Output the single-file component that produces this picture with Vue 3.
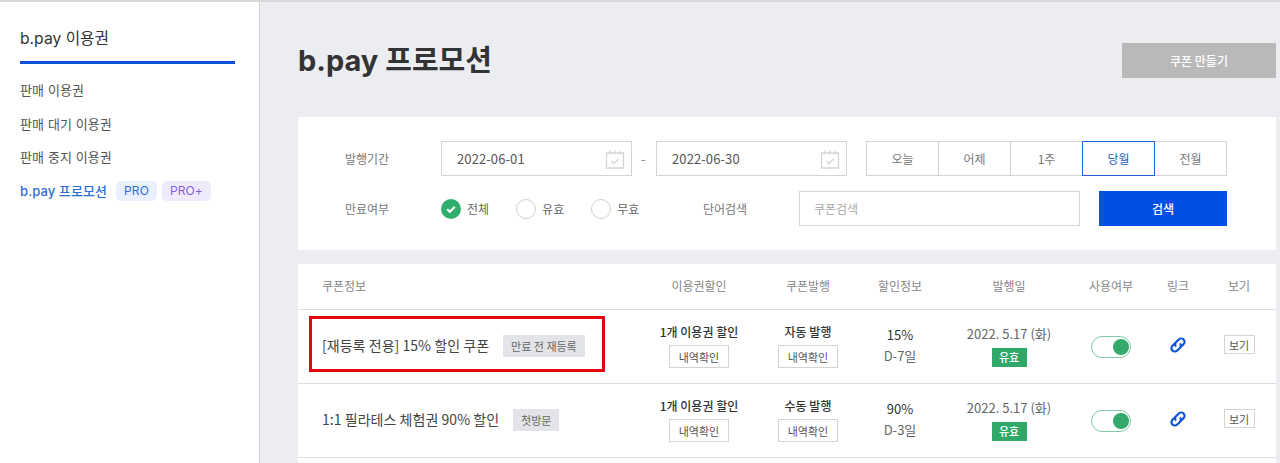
<template>
  <div class="page">
    <div class="topline"></div>
    <div class="layout">
      <aside class="side">
        <h2 class="side-title">b.pay 이용권</h2>
        <ul class="menu">
          <li v-for="m in menu" :key="m">{{ m }}</li>
          <li class="on">
            b.pay 프로모션
            <span class="pro">PRO</span>
            <span class="pro plus">PRO+</span>
          </li>
        </ul>
      </aside>

      <main class="main">
        <div class="head">
          <h1>b.pay 프로모션</h1>
          <button class="make">쿠폰 만들기</button>
        </div>

        <section class="card search">
          <div class="line">
            <span class="lab">발행기간</span>
            <div class="date" v-for="(d, i) in dates" :key="d" :class="{ second: i === 1 }">
              <span>{{ d }}</span>
              <svg width="20" height="20" viewBox="0 0 20 20" fill="none" stroke="#d6d6d6" stroke-width="1.3">
                <path d="M1.5 4h17v15h-17z" />
                <path d="M5 1.5v4M10 1.5v4M15 1.5v4" />
                <path d="M6.5 12l2.5 2.5 4.5-4.5" />
              </svg>
            </div>
            <div class="presets">
              <button
                v-for="p in presets"
                :key="p"
                :class="{ active: p === '당월' }">{{ p }}</button>
            </div>
          </div>
          <div class="line">
            <span class="lab">만료여부</span>
            <div class="radios">
              <label v-for="r in radios" :key="r">
                <span class="circle" :class="{ checked: r === '전체' }">
                  <svg v-if="r === '전체'" width="12" height="12" viewBox="0 0 12 12" fill="none" stroke="#fff" stroke-width="2">
                    <path d="M2.2 6.2l2.7 2.6 4.9-5" />
                  </svg>
                </span>
                {{ r }}
              </label>
            </div>
            <span class="lab">단어검색</span>
            <input class="word" type="text" placeholder="쿠폰검색" />
            <button class="go">검색</button>
          </div>
        </section>

        <section class="card list">
          <div class="row th">
            <div class="c-info">쿠폰정보</div>
            <div>이용권할인</div>
            <div>쿠폰발행</div>
            <div>할인정보</div>
            <div>발행일</div>
            <div>사용여부</div>
            <div>링크</div>
            <div>보기</div>
          </div>
          <div class="row td" v-for="(c, i) in coupons" :key="c.name">
            <div class="c-info">
              <span class="name">{{ c.name }}</span>
              <span class="tag">{{ c.tag }}</span>
            </div>
            <div class="stack">
              <b>1개 이용권 할인</b>
              <button class="small">내역확인</button>
            </div>
            <div class="stack">
              <b>{{ c.issue }}</b>
              <button class="small">내역확인</button>
            </div>
            <div class="stack disc">
              <em>{{ c.pct }}</em>
              <span>{{ c.day }}</span>
            </div>
            <div class="stack">
              <span class="when">2022. 5.17 (화)</span>
              <span class="valid">유효</span>
            </div>
            <div><span class="toggle"><i></i></span></div>
            <div>
              <svg class="chain" width="18" height="18" viewBox="0 0 24 24" fill="none" stroke="#0b50d8" stroke-width="2.8" stroke-linecap="round" stroke-linejoin="round">
                <g transform="rotate(-45 12 12)">
                  <path d="M10.5 7.5H6a4.5 4.5 0 0 0 0 9h5a4.5 4.5 0 0 0 4.2-3" />
                  <path d="M13.5 16.5H18a4.5 4.5 0 0 0 0-9h-5a4.5 4.5 0 0 0-4.2 3" />
                </g>
              </svg>
            </div>
            <div><button class="view">보기</button></div>
            <div v-if="i === 0" class="redbox"></div>
          </div>
        </section>
      </main>
    </div>
  </div>
</template>

<script setup>
const menu = ['판매 이용권', '판매 대기 이용권', '판매 중지 이용권']
const dates = ['2022-06-01', '2022-06-30']
const presets = ['오늘', '어제', '1주', '당월', '전월']
const radios = ['전체', '유효', '무효']

const coupons = [
  { name: '[재등록 전용] 15% 할인 쿠폰', tag: '만료 전 재등록', issue: '자동 발행', pct: '15%', day: 'D-7일' },
  { name: '1:1 필라테스 체험권 90% 할인', tag: '첫방문', issue: '수동 발행', pct: '90%', day: 'D-3일' }
]
</script>

<style>
html, body {
  margin: 0;
  height: 100%;
  overflow: hidden;
}
</style>

<style scoped>
* {
  box-sizing: border-box;
}

.page {
  height: 100vh;
  display: flex;
  flex-direction: column;
  overflow: hidden;
  font-family: "Noto Sans CJK KR", "Noto Sans", sans-serif;
  color: #444;
  background: #ebedf0;
}

button {
  font-family: inherit;
  cursor: pointer;
}

.topline {
  height: 2px;
  flex: none;
  background: #d8d8d8;
}

.layout {
  flex: 1;
  display: flex;
  min-height: 0;
}

.side {
  width: 260px;
  flex: none;
  padding: 0 24px 0 20px;
  background: #fff;
  border-right: 1px solid #cfd2d6;
  font-family: Inter, "Noto Sans CJK KR", sans-serif;
}

.side-title {
  margin: 0;
  height: 62px;
  padding-top: 25px;
  font-size: 15.7px;
  line-height: 24px;
  font-weight: 400;
  color: #333;
  border-bottom: 3px solid #0b50d8;
}

.menu {
  list-style: none;
  margin: 0;
  padding: 9px 0 0;
}

.menu li {
  height: 33.6px;
  display: flex;
  align-items: center;
  font-size: 13px;
  letter-spacing: .1px;
  color: #555;
}

.menu li.on {
  color: #2a6fd6;
  font-weight: 500;
}

.pro {
  height: 20px;
  margin-left: 9px;
  padding: 0 8px;
  border-radius: 5px;
  background: #e8f0fe;
  color: #2a6fd6;
  font-size: 12px;
  line-height: 20px;
  font-weight: 400;
}

.pro.plus {
  margin-left: 5px;
  background: #f0eafd;
  color: #8a5ce6;
}

.main {
  flex: 1;
  min-width: 0;
  display: flex;
  flex-direction: column;
  padding: 41px 4px 0 38px;
}

.head {
  display: flex;
  justify-content: space-between;
  align-items: center;
  height: 35px;
  margin-bottom: 39px;
}

.head h1 {
  margin: 0;
  padding-bottom: 6px;
  font-family: Inter, "Noto Sans CJK KR", sans-serif;
  font-size: 29px;
  font-weight: 700;
  color: #333;
}

.make {
  width: 154px;
  height: 35px;
  border: 0;
  background: #b9b9b9;
  color: #fff;
  font-size: 12px;
  font-weight: 500;
}

.card {
  background: #fff;
}

.search {
  display: flex;
  flex-direction: column;
  gap: 15px;
  height: 133px;
  padding: 24px 49px 0 47px;
  margin-bottom: 14px;
  font-size: 12px;
}

.line {
  display: flex;
  align-items: center;
  height: 35px;
}

.lab {
  width: 96px;
  flex: none;
  color: #777;
}

.date {
  width: 191px;
  height: 35px;
  display: flex;
  align-items: center;
  justify-content: space-between;
  padding: 0 6px 0 15px;
  border: 1px solid #d4d4d4;
  font-size: 13px;
  letter-spacing: .1px;
  color: #555;
}

.date.second {
  margin-left: 24px;
  position: relative;
}

.date.second::before {
  content: "-";
  position: absolute;
  left: -16px;
  color: #888;
}

.presets {
  display: flex;
  width: 361px;
  height: 35px;
  margin-left: 19px;
  padding-left: 1px;
}

.presets button {
  flex: 1;
  margin-left: -1px;
  padding: 0;
  border: 1px solid #d4d4d4;
  background: #fff;
  color: #777;
  font-size: 12px;
}

.presets button.active {
  position: relative;
  border-color: #1f62d8;
  color: #2a5fd0;
}

.radios {
  width: 262px;
  flex: none;
  display: flex;
  gap: 27px;
}

.radios label {
  display: flex;
  align-items: center;
  gap: 6px;
  color: #666;
}

.circle {
  width: 20px;
  height: 20px;
  display: flex;
  align-items: center;
  justify-content: center;
  border: 1px solid #cfcfcf;
  border-radius: 50%;
}

.circle.checked {
  border: 0;
  background: #2fae6c;
}

.word {
  flex: 1;
  min-width: 0;
  height: 35px;
  padding: 0 14px;
  border: 1px solid #d4d4d4;
  outline: none;
  font-family: inherit;
  font-size: 12px;
}

.word::placeholder {
  color: #aaa;
}

.go {
  width: 128px;
  height: 35px;
  margin-left: 19px;
  border: 0;
  background: #0050e6;
  color: #fff;
  font-size: 12px;
  font-weight: 500;
}

.list {
  flex: 1;
}

.row {
  position: relative;
  display: grid;
  grid-template-columns: 322px 110px 108px 76px 142px 62px 72px 50px;
  padding: 0 12px 0 24px;
  align-items: center;
  text-align: center;
  border-bottom: 1px solid #dcdee0;
}

.th {
  height: 46px;
  padding-bottom: 2px;
  font-size: 12px;
  color: #888;
}

.td {
  height: 74px;
  padding-bottom: 2px;
}

.c-info {
  display: flex;
  align-items: center;
  gap: 14px;
  text-align: left;
}

.name {
  margin-bottom: 2px;
  font-size: 14px;
  letter-spacing: .04px;
  color: #444;
}

.tag {
  height: 22px;
  padding: 0 8px;
  background: #e2e4e7;
  font-size: 11px;
  line-height: 22px;
  color: #666;
}

.stack {
  display: flex;
  flex-direction: column;
  align-items: center;
  font-size: 12px;
}

.stack b {
  font-weight: 500;
  line-height: 18px;
  margin-bottom: 4px;
  color: #333;
}

.small {
  width: 60px;
  height: 23px;
  padding: 0;
  border: 1px solid #d4d4d4;
  background: #fff;
  color: #555;
  font-size: 11px;
}

.disc {
  padding-bottom: 1px;
}

.disc em {
  font-style: normal;
  font-size: 13px;
  line-height: 21px;
  color: #333;
}

.disc span {
  font-size: 13px;
  line-height: 21px;
  color: #666;
}

.when {
  font-size: 13px;
  line-height: 20px;
  margin-bottom: 4px;
  color: #666;
}

.valid {
  width: 35px;
  height: 19px;
  background: #2fa96a;
  color: #fff;
  font-size: 11px;
  line-height: 19px;
  font-weight: 500;
}

.toggle {
  display: inline-flex;
  align-items: center;
  justify-content: flex-end;
  width: 40px;
  height: 22px;
  padding-right: 1.5px;
  border: 1.5px solid #7fcaa3;
  border-radius: 11px;
  vertical-align: middle;
}

.toggle i {
  width: 16px;
  height: 16px;
  border-radius: 50%;
  background: #33aa6b;
}

.chain {
  display: block;
  margin: 0 auto;
  transform: translateY(-1px);
}

.view {
  display: block;
  width: 31px;
  height: 19px;
  margin: 0 auto 2px;
  padding: 0;
  border: 1px solid #d4d4d4;
  background: #fff;
  color: #555;
  font-size: 11px;
}

.redbox {
  position: absolute;
  left: 11px;
  top: 6px;
  width: 296px;
  height: 56px;
  border: 3px solid #e8000f;
  pointer-events: none;
}
</style>
